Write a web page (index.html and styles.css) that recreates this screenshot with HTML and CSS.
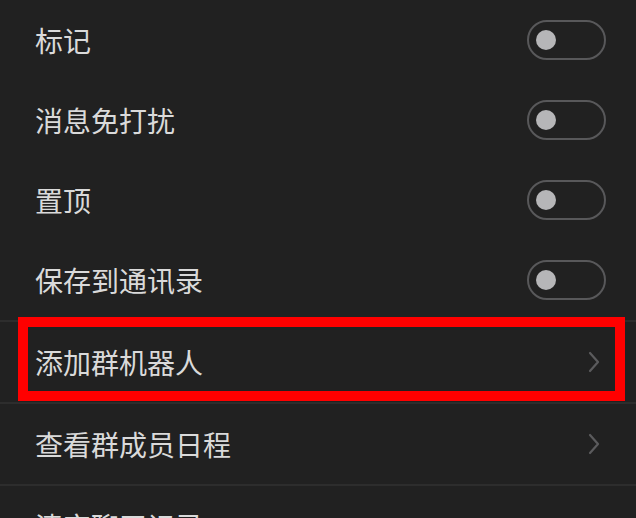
FILE: index.html
```html
<!DOCTYPE html>
<html lang="zh">
<head>
<meta charset="utf-8">
<link rel="stylesheet" href="styles.css">
</head>
<body>
<div class="list">
  <div class="row"><span class="label">标记</span><span class="toggle"><span class="knob"></span></span></div>
  <div class="row"><span class="label">消息免打扰</span><span class="toggle"><span class="knob"></span></span></div>
  <div class="row"><span class="label">置顶</span><span class="toggle"><span class="knob"></span></span></div>
  <div class="row"><span class="label">保存到通讯录</span><span class="toggle"><span class="knob"></span></span></div>
  <div class="row link divided">
    <span class="label">添加群机器人</span>
    <svg class="chev" width="12" height="22" viewBox="0 0 12 22"><path d="M2 2 L10 11 L2 20" fill="none" stroke="#5b5b5d" stroke-width="2.2" stroke-linecap="round" stroke-linejoin="round"/></svg>
    <div class="highlight"></div>
  </div>
  <div class="row link divided">
    <span class="label">查看群成员日程</span>
    <svg class="chev" width="12" height="22" viewBox="0 0 12 22"><path d="M2 2 L10 11 L2 20" fill="none" stroke="#5b5b5d" stroke-width="2.2" stroke-linecap="round" stroke-linejoin="round"/></svg>
  </div>
  <div class="row link divided">
    <span class="label">清空聊天记录</span>
  </div>
</div>
</body>
</html>
```
FILE: styles.css
```css
html, body {
  margin: 0;
  padding: 0;
  background: #212121;
}
body {
  width: 636px;
  height: 518px;
  overflow: hidden;
  font-family: "Noto Sans CJK SC", "Noto Sans", sans-serif;
}
.list {
  display: flex;
  flex-direction: column;
}
.row {
  position: relative;
  height: 80px;
  display: flex;
  align-items: center;
  justify-content: space-between;
  padding: 0 30px 0 35px;
  box-sizing: border-box;
  flex-shrink: 0;
}
.divided {
  border-top: 2px solid #2d2d2d;
  height: 82px;
}
.label {
  font-size: 28px;
  color: #dadada;
  line-height: 1;
}
.toggle {
  width: 79px;
  height: 40px;
  box-sizing: border-box;
  border: 2px solid #58585a;
  border-radius: 20px;
  display: flex;
  align-items: center;
  padding-left: 7px;
}
.knob {
  width: 20px;
  height: 20px;
  border-radius: 50%;
  background: #b6b6b8;
}
.link {
  padding-right: 36px;
}
.chev {
  display: block;
}
.highlight {
  position: absolute;
  left: 18px;
  top: -5px;
  width: 607px;
  height: 84px;
  box-sizing: border-box;
  border: 10px solid #ff0000;
  pointer-events: none;
}
```
